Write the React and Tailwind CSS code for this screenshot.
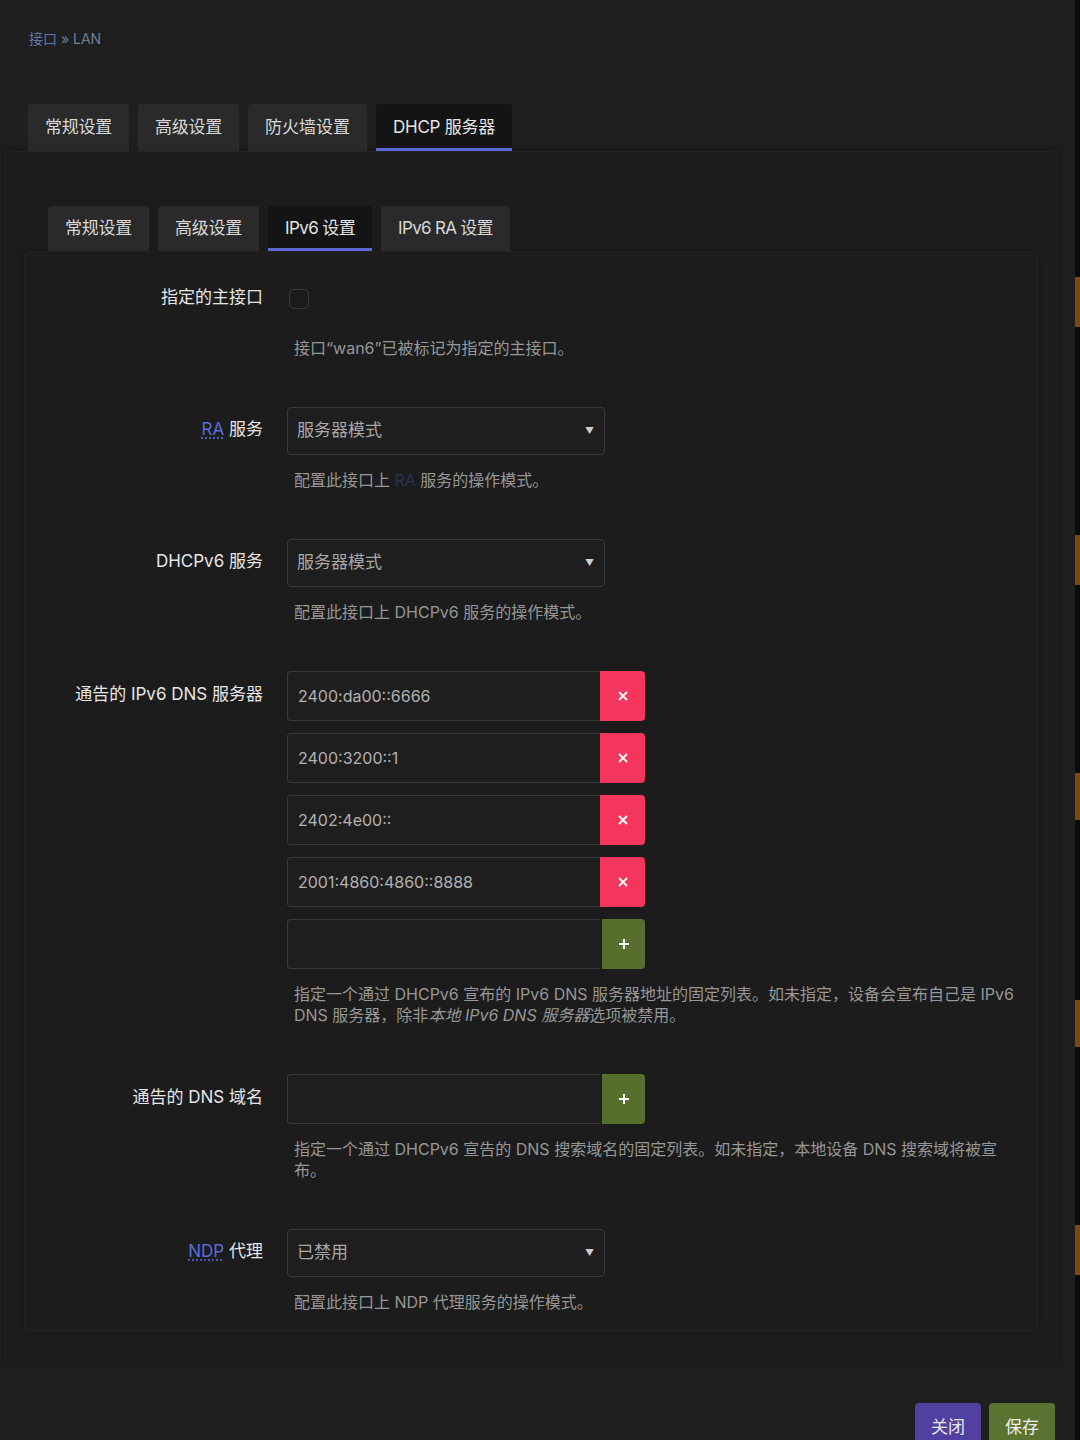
import React from 'react';

const FONT = { fontFamily: 'Inter, "Noto Sans CJK SC", "Noto Sans", sans-serif' };

const Tab = ({ label, active, track = '' }) => (
  <div
    className={`h-full flex items-center px-[17px] rounded-t-[4px] text-[17px] ${track} ${
      active ? 'bg-[#141414] text-[#e4e4e4] border-b-[3px] border-[#5b67d4] pt-[3px]' : 'bg-[#2a2a2a] text-[#d8d8d8]'
    }`}
  >
    {label}
  </div>
);

const Abbr = ({ children }) => (
  <span className="text-[#5a6bd8] underline decoration-dotted decoration-[#5a6bd8] underline-offset-[3px]">{children}</span>
);

const Row = ({ label, h = 48, children, desc }) => (
  <div className="flex">
    <div className="w-[238px] shrink-0 flex items-center justify-end text-[17px] text-[#e6e6e6] pb-[3px]" style={{ height: h }}>
      {label}
    </div>
    <div className="ml-[24px] flex-1">
      {children}
      <div className="mt-[15px] pl-[7px] text-[16px] leading-[21px] text-[#979797]">{desc}</div>
    </div>
  </div>
);

const Select = ({ value }) => (
  <div className="w-[318px] h-[48px] border border-[#3a3a3a] rounded-[4px] bg-[#1e1e1e] flex items-center justify-between pl-[9px] pr-[10px]">
    <span className="text-[17px] text-[#a8a8a8]">{value}</span>
    <span className="text-[9px] text-[#cfcfcf]">▼</span>
  </div>
);

const ListInput = ({ value, add }) => (
  <div className="flex h-[50px] w-[358px]">
    <div className="flex-1 border border-[#3a3a3a] border-r-0 rounded-l-[4px] bg-[#1e1e1e] flex items-center pl-[10px] text-[16px] text-[#b2b2b2]">
      {value}
    </div>
    {add ? (
      <div className="w-[45px] rounded-r-[4px] bg-[#566f2d] border-l-2 border-[#1e1e1e] flex items-center justify-center">
        <svg width="12" height="12" viewBox="0 0 12 12">
          <path d="M6 1v10M1 6h10" stroke="#fff" strokeWidth="2" />
        </svg>
      </div>
    ) : (
      <div className="w-[45px] rounded-r-[4px] bg-[#f5365c] flex items-center justify-center">
        <svg width="10" height="10" viewBox="0 0 10 10">
          <path d="M1 1l8 8M9 1l-8 8" stroke="#fff" strokeWidth="1.8" />
        </svg>
      </div>
    )}
  </div>
);

export default function App() {
  const dns = ['2400:da00::6666', '2400:3200::1', '2402:4e00::', '2001:4860:4860::8888'];
  const marks = [
    [277, 50],
    [535, 50],
    [773, 47],
    [1000, 47],
    [1225, 50],
  ];
  return (
    <div className="relative w-[1080px] h-[1440px] overflow-hidden bg-[#1f1f1f]" style={FONT}>
      {/* breadcrumb */}
      <div className="pt-[29px] pl-[29px] text-[14px] leading-[20px]">
        <span className="text-[#5a7bb0]">接口</span>
        <span className="text-[#6c7f9c]"> » LAN</span>
      </div>

      {/* top tabs */}
      <div className="mt-[55px] ml-[28px] flex gap-[9px] h-[47px]">
        <Tab label="常规设置" track="tracking-[-0.25px]" />
        <Tab label="高级设置" track="tracking-[-0.25px]" />
        <Tab label="防火墙设置" />
        <Tab label="DHCP 服务器" active track="tracking-[-0.25px]" />
      </div>

      {/* outer panel */}
      <div className="ml-[5px] w-[1053px] h-[1211px] bg-[#1c1c1c] rounded-[4px] border border-[#232323] shadow-[0_0_10px_rgba(0,0,0,0.35)] pt-[54px] pl-[18px] pr-[19px]">
        <div className="ml-[24px] flex gap-[9px] h-[45px]">
          <Tab label="常规设置" track="tracking-[-0.25px]" />
          <Tab label="高级设置" track="tracking-[-0.25px]" />
          <Tab label="IPv6 设置" active track="tracking-[-0.6px]" />
          <Tab label="IPv6 RA 设置" track="tracking-[-0.7px]" />
        </div>

        <div className="h-[1081px] bg-[#1c1c1c] border border-[#222222] rounded-[4px] shadow-[0_0_6px_rgba(0,0,0,0.3)] pt-[23px] flex flex-col gap-[48px]">
          <Row label="指定的主接口" desc={<>接口“wan6”已被标记为指定的主接口。</>}>
            <div className="h-[48px] flex items-center pl-[2px]">
              <div className="w-[20px] h-[20px] rounded-[5px] border border-[#3c3c3c] bg-[#1c1c1c]" />
            </div>
          </Row>

          <Row
            label={<><Abbr>RA</Abbr>&nbsp;服务</>}
            desc={<>配置此接口上 <span className="text-[#2b3450]">RA</span> 服务的操作模式。</>}
          >
            <Select value="服务器模式" />
          </Row>

          <Row label="DHCPv6 服务" desc="配置此接口上 DHCPv6 服务的操作模式。">
            <Select value="服务器模式" />
          </Row>

          <Row
            label="通告的 IPv6 DNS 服务器"
            h={50}
            desc={
              <>
                指定一个通过 DHCPv6 宣布的 IPv6 DNS 服务器地址的固定列表。如未指定，设备会宣布自己是 IPv6
                <br />
                DNS 服务器，除非<i>本地 IPv6 DNS 服务器</i>选项被禁用。
              </>
            }
          >
            <div className="flex flex-col gap-[12px]">
              {dns.map((d) => (
                <ListInput key={d} value={d} />
              ))}
              <ListInput value="" add />
            </div>
          </Row>

          <Row
            label="通告的 DNS 域名"
            h={50}
            desc={
              <>
                指定一个通过 DHCPv6 宣告的 DNS 搜索域名的固定列表。如未指定，本地设备 DNS 搜索域将被宣
                <br />
                布。
              </>
            }
          >
            <ListInput value="" add />
          </Row>

          <Row label={<><Abbr>NDP</Abbr>&nbsp;代理</>} desc="配置此接口上 NDP 代理服务的操作模式。">
            <Select value="已禁用" />
          </Row>
        </div>
      </div>

      {/* footer buttons */}
      <div className="mt-[41px] flex justify-end gap-[8px] pr-[25px]">
        <div className="h-[48px] px-[16px] pt-[12px] rounded-[4px] bg-[#5240a0] text-[17px] text-[#e8e8e8] leading-[24px]">关闭</div>
        <div className="h-[48px] px-[16px] pt-[12px] rounded-[4px] bg-[#5b7331] text-[17px] text-[#f0f0f0] leading-[24px]">保存</div>
      </div>

      {/* scrollbar track with match marks */}
      <div className="absolute top-0 right-0 w-[5px] h-full bg-[#0b0b0b]">
        {marks.map(([t, h]) => (
          <div key={t} className="absolute left-0 w-full bg-[#7a4a0c]" style={{ top: t, height: h }} />
        ))}
      </div>
    </div>
  );
}
